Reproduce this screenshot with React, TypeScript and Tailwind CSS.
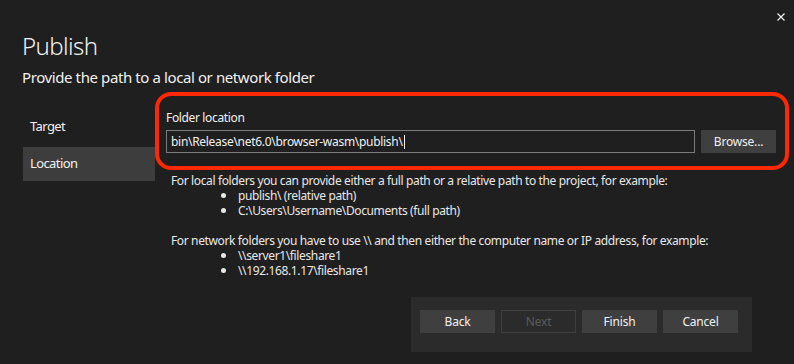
import React from 'react'

const font = { fontFamily: '"Noto Sans", "Open Sans", sans-serif' }

function NavItem({ label, active }: { label: string; active?: boolean }) {
  return (
    <div
      className={`h-[34px] flex items-center pl-[7px] text-[13px] tracking-[-0.6px] text-[#f1f1f1] ${
        active ? 'bg-[#3d3d3d]' : ''
      }`}
    >
      {label}
    </div>
  )
}

function Btn({ label, disabled }: { label: string; disabled?: boolean }) {
  return (
    <div
      className={`w-[75px] h-[23px] flex items-center justify-center text-[12px] tracking-[-0.2px] ${
        disabled ? 'border border-[#3f3f3f] text-[#5c5c5c]' : 'bg-[#3f3f3f] text-[#f1f1f1]'
      }`}
    >
      {label}
    </div>
  )
}

function Bullet({ text }: { text: string }) {
  return (
    <div className="h-[15px] flex items-center">
      <span className="w-[67px] flex justify-end pr-[12px]">
        <span className="w-[5px] h-[5px] rounded-full bg-[#e8e8e8]" />
      </span>
      {text}
    </div>
  )
}

export default function App() {
  const local = ['publish\\ (relative path)', 'C:\\Users\\Username\\Documents (full path)']
  const network = ['\\\\server1\\fileshare1', '\\\\192.168.1.17\\fileshare1']

  return (
    <div className="w-[794px] h-[364px] bg-[#1f1f1f] text-[#f1f1f1] overflow-hidden" style={font}>
      {/* header */}
      <div className="h-[30px] flex justify-end pt-[13px] pr-[9px]">
        <svg width="8" height="8" viewBox="0 0 8 8">
          <path d="M0.5 0.5 L7.5 7.5 M7.5 0.5 L0.5 7.5" stroke="#f1f1f1" strokeWidth="1.2" />
        </svg>
      </div>
      <div className="pl-[22px]">
        <div className="text-[24px] leading-[32px] font-light tracking-[-0.6px]">Publish</div>
        <div className="mt-[5px] text-[15px] leading-[20px] tracking-[-0.4px]">
          Provide the path to a local or network folder
        </div>
      </div>

      {/* body */}
      <div className="mt-[5px] flex">
        <div className="ml-[23px] w-[132px] pt-[18px] flex flex-col gap-[3px]">
          <NavItem label="Target" />
          <NavItem label="Location" active />
        </div>

        <div className="flex-1 flex flex-col">
          <div className="w-[634px] border-4 border-[#ff2800] rounded-[16px] pt-[14px] pb-[13px] pl-[7px] pr-[9px]">
            <div className="text-[12px] leading-[16px] tracking-[-0.35px]">Folder location</div>
            <div className="mt-[4px] flex gap-[6px]">
              <div className="w-[529px] h-[23px] border border-[#7a7a7a] flex items-center pl-[4px] text-[12px] tracking-[-0.3px]">
                bin\Release\net6.0\browser-wasm\publish\
                <span className="ml-[1px] w-px h-[14px] bg-[#f1f1f1]" />
              </div>
              <Btn label="Browse..." />
            </div>
          </div>

          <div className="mt-[3px] pl-[16px] text-[12px] leading-[15px] tracking-[-0.37px] text-[#e8e8e8]">
            <div className="h-[15px]">
              For local folders you can provide either a full path or a relative path to the project, for example:
            </div>
            {local.map((t) => (
              <Bullet key={t} text={t} />
            ))}
            <div className="h-[15px]" />
            <div className="h-[15px]">
              For network folders you have to use \\ and then either the computer name or IP address, for example:
            </div>
            {network.map((t) => (
              <Bullet key={t} text={t} />
            ))}
          </div>

          <div className="mt-[19px] ml-[256px] w-[341px] h-[55px] bg-[#2b2b2b] pt-[13px] pl-[9px] flex gap-[6px]">
            <Btn label="Back" />
            <Btn label="Next" disabled />
            <Btn label="Finish" />
            <Btn label="Cancel" />
          </div>
        </div>
      </div>
    </div>
  )
}
